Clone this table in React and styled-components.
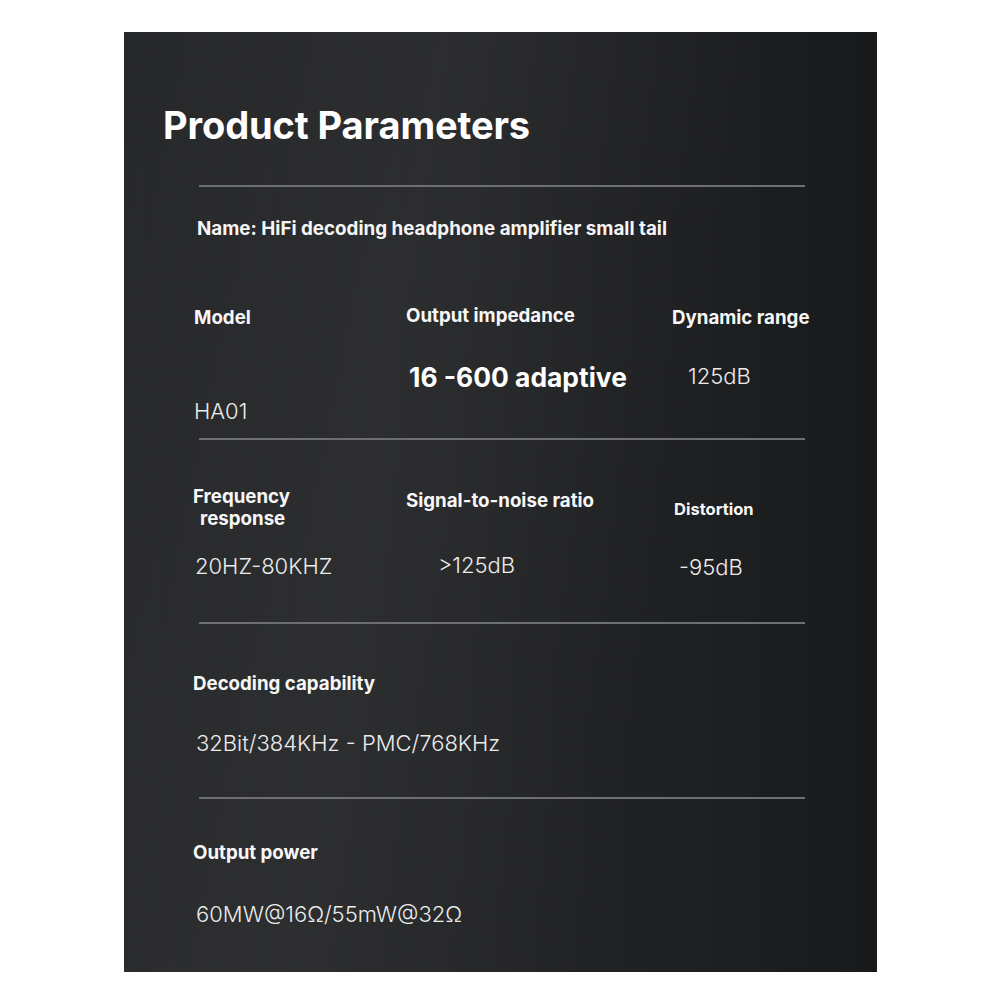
import React from "react";
import styled, { createGlobalStyle } from "styled-components";

const Global = createGlobalStyle`
  html, body { margin: 0; padding: 0; background: #ffffff; }
  body { width: 1001px; height: 1001px; overflow: hidden; }
`;

const Page = styled.div`
  width: 1001px;
  height: 1001px;
  padding: 32px 0 0 124px;
  box-sizing: border-box;
`;

const Panel = styled.div`
  width: 753px;
  height: 940px;
  box-sizing: border-box;
  background:
    linear-gradient(100deg, rgba(255,255,255,0.0) 0%, rgba(255,255,255,0.035) 35%, rgba(255,255,255,0.0) 70%),
    linear-gradient(90deg, #27282a 0%, #242527 45%, #1e1f21 80%, #18191b 100%);
  color: #f5f5f5;
  font-family: Inter, "Liberation Sans", sans-serif;
  display: flex;
  flex-direction: column;
`;

const Title = styled.h1`
  margin: 0;
  padding: 74px 0 0 39px;
  height: 153px;
  box-sizing: border-box;
  font-size: 38px;
  line-height: 38px;
  font-weight: 700;
  letter-spacing: -0.1px;
  color: #ffffff;
`;

const Divider = styled.div`
  margin-left: 75px;
  width: 606px;
  height: 2px;
  background: #6e6f71;
`;

const NameLine = styled.div`
  margin: 30px 0 0 73px;
  font-size: 18.8px;
  line-height: 24px;
  font-weight: 700;
`;

const Section = styled.div`
  height: ${(p) => p.$h}px;
  display: grid;
  grid-template-columns: ${(p) => (p.$single ? "1fr" : "213px 266px 1fr")};
  padding-left: 69px;
  box-sizing: border-box;
  align-items: start;
`;

const Cell = styled.div`
  display: flex;
  flex-direction: column;
  padding-top: ${(p) => p.$top}px;
`;

const Label = styled.div`
  font-size: ${(p) => p.$size || 18.7}px;
  line-height: 22px;
  font-weight: 700;
  color: #f7f7f7;
  padding-left: ${(p) => p.$indent || 0}px;
  white-space: nowrap;
`;

const LabelLine = styled.span`
  display: block;
  padding-left: ${(p) => p.$indent || 0}px;
`;

const Value = styled.div`
  margin-top: ${(p) => p.$gap}px;
  padding-left: ${(p) => p.$indent || 0}px;
  font-size: ${(p) => (p.$big ? 26.4 : 22)}px;
  line-height: 28px;
  font-weight: ${(p) => (p.$big ? 700 : 300)};
  color: ${(p) => (p.$big ? "#ffffff" : "#ececec")};
  white-space: nowrap;
`;

export default function App() {
  return (
    <>
      <Global />
      <Page>
        <Panel>
          <Title>Product Parameters</Title>
          <Divider />
          <NameLine>Name: HiFi decoding headphone amplifier small tail</NameLine>
          <Section $h={197}>
            <Cell $top={66}>
              <Label $indent={1}>Model</Label>
              <Value $gap={68} $indent={1}>HA01</Value>
            </Cell>
            <Cell $top={64}>
              <Label>Output impedance</Label>
              <Value $big $gap={36} $indent={3}>16 -600 adaptive</Value>
            </Cell>
            <Cell $top={66}>
              <Label>Dynamic range</Label>
              <Value $gap={33} $indent={16}>125dB</Value>
            </Cell>
          </Section>
          <Divider />
          <Section $h={183}>
            <Cell $top={46}>
              <Label>
                <LabelLine>Frequency</LabelLine>
                <LabelLine $indent={7}>response</LabelLine>
              </Label>
              <Value $gap={22} $indent={2}>20HZ-80KHZ</Value>
            </Cell>
            <Cell $top={50}>
              <Label>Signal-to-noise ratio</Label>
              <Value $gap={39} $indent={32}>&gt;125dB</Value>
            </Cell>
            <Cell $top={58}>
              <Label $size={16.5} $indent={2}>Distortion</Label>
              <Value $gap={33} $indent={7}>-95dB</Value>
            </Cell>
          </Section>
          <Divider />
          <Section $h={173} $single>
            <Cell $top={49}>
              <Label>Decoding capability</Label>
              <Value $gap={34} $indent={3}>32Bit/384KHz - PMC/768KHz</Value>
            </Cell>
          </Section>
          <Divider />
          <Section $h={173} $single>
            <Cell $top={43}>
              <Label>Output power</Label>
              <Value $gap={36} $indent={3}>60MW@16Ω/55mW@32Ω</Value>
            </Cell>
          </Section>
        </Panel>
      </Page>
    </>
  );
}
